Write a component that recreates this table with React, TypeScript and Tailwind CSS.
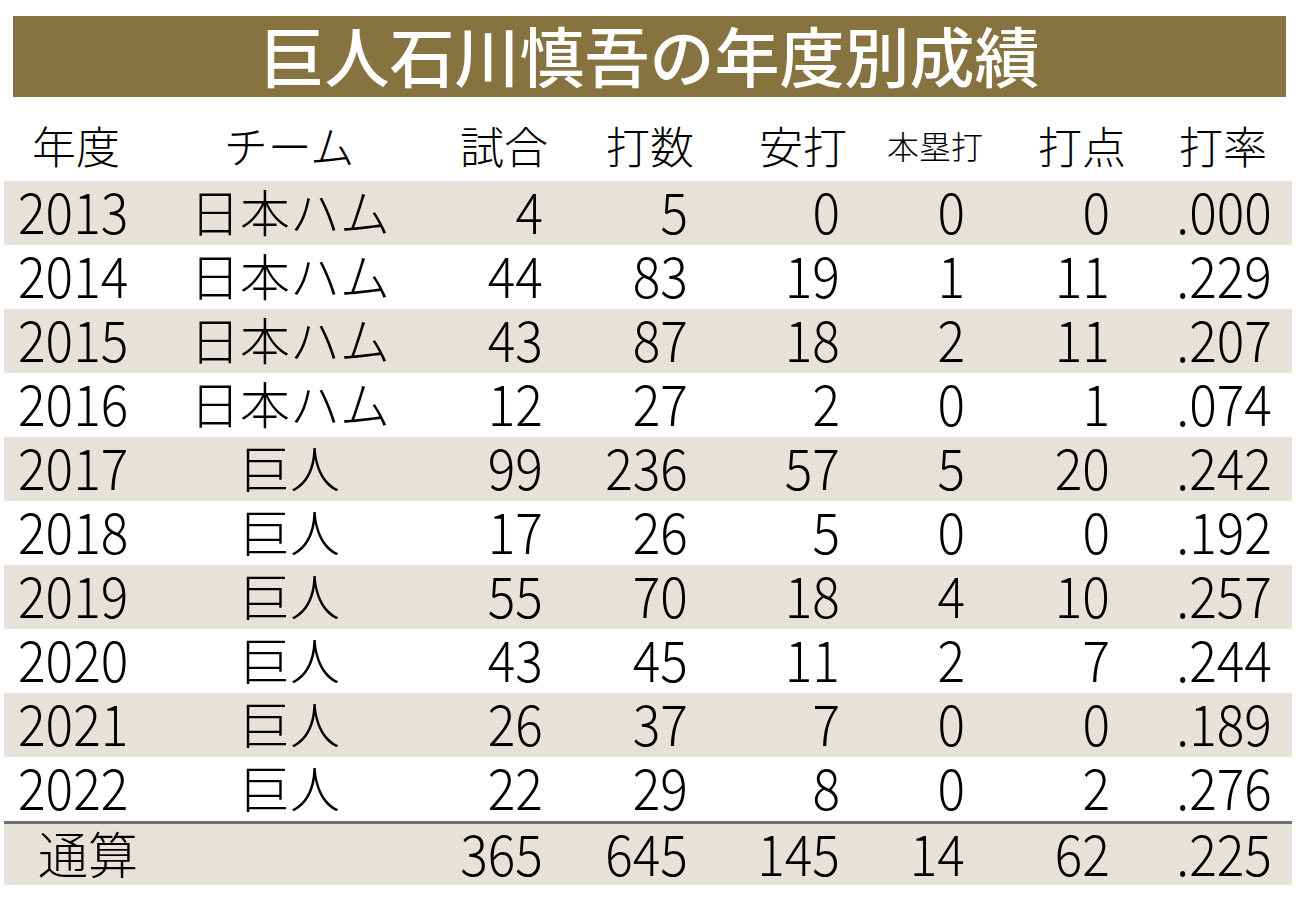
const rows = [
  { y: "2013", team: "日本ハム", g: "4", ab: "5", h: "0", hr: "0", rbi: "0", avg: ".000" },
  { y: "2014", team: "日本ハム", g: "44", ab: "83", h: "19", hr: "1", rbi: "11", avg: ".229" },
  { y: "2015", team: "日本ハム", g: "43", ab: "87", h: "18", hr: "2", rbi: "11", avg: ".207" },
  { y: "2016", team: "日本ハム", g: "12", ab: "27", h: "2", hr: "0", rbi: "1", avg: ".074" },
  { y: "2017", team: "巨人", g: "99", ab: "236", h: "57", hr: "5", rbi: "20", avg: ".242" },
  { y: "2018", team: "巨人", g: "17", ab: "26", h: "5", hr: "0", rbi: "0", avg: ".192" },
  { y: "2019", team: "巨人", g: "55", ab: "70", h: "18", hr: "4", rbi: "10", avg: ".257" },
  { y: "2020", team: "巨人", g: "43", ab: "45", h: "11", hr: "2", rbi: "7", avg: ".244" },
  { y: "2021", team: "巨人", g: "26", ab: "37", h: "7", hr: "0", rbi: "0", avg: ".189" },
  { y: "2022", team: "巨人", g: "22", ab: "29", h: "8", hr: "0", rbi: "2", avg: ".276" },
];

const font = { fontFamily: '"Noto Sans CJK JP", "Noto Sans", sans-serif' };

// condensed digits: the reference uses a narrow face, so squeeze the regular one
function Num({ w, children }: { w: string; children: React.ReactNode }) {
  return (
    <div className={`${w} text-right text-[56px] font-light leading-none`}>
      <span className="inline-block origin-right scale-x-[0.92]">{children}</span>
    </div>
  );
}

function Row({ r, shaded }: { r: (typeof rows)[number]; shaded: boolean }) {
  return (
    <div className={`flex h-[64px] items-center pb-[6px] ${shaded ? "bg-[#e6e2d9]" : ""}`}>
      <div className="w-[156px] pl-[14px] text-[56px] font-light leading-none">
        <span className="inline-block origin-left scale-x-[0.92]">{r.y}</span>
      </div>
      <div className="w-[260px] text-center text-[50px] font-light leading-none">{r.team}</div>
      <Num w="w-[123px]">{r.g}</Num>
      <Num w="w-[145px]">{r.ab}</Num>
      <Num w="w-[152px]">{r.h}</Num>
      <Num w="w-[125px]">{r.hr}</Num>
      <Num w="w-[145px]">{r.rbi}</Num>
      <Num w="w-[162px]">{r.avg}</Num>
    </div>
  );
}

export default function App() {
  return (
    <div className="h-[908px] w-[1300px] bg-white text-black" style={font}>
      <div className="pt-[16px] pl-[13px] pr-[14px]">
        <div className="flex h-[81px] items-center justify-center pb-[4px] bg-[#877340] text-[65px] font-medium leading-none text-white">
          巨人石川慎吾の年度別成績
        </div>
      </div>
      <div className="flex h-[84px] items-center whitespace-nowrap pt-[12px] text-[44px] font-light leading-none">
        <div className="flex w-[152px] justify-center">年度</div>
        <div className="flex w-[274px] justify-center">チーム</div>
        <div className="flex w-[156px] justify-center">試合</div>
        <div className="flex w-[136px] justify-center">打数</div>
        <div className="flex w-[170px] justify-center">安打</div>
        <div className="flex w-[94px] justify-center text-[32px]">本塁打</div>
        <div className="flex w-[200px] justify-center">打点</div>
        <div className="flex w-[82px] justify-center">打率</div>
      </div>
      <div className="ml-[4px] mr-[8px]">
        {rows.map((r, i) => (
          <Row key={r.y} r={r} shaded={i % 2 === 0} />
        ))}
        <div className="flex h-[64px] items-center border-t-[3px] border-[#6e6e6e] bg-[#e6e2d9] pb-[6px]">
          <div className="w-[416px] pl-[34px] text-[50px] font-light leading-none">通算</div>
          <Num w="w-[123px]">365</Num>
          <Num w="w-[145px]">645</Num>
          <Num w="w-[152px]">145</Num>
          <Num w="w-[125px]">14</Num>
          <Num w="w-[145px]">62</Num>
          <Num w="w-[162px]">.225</Num>
        </div>
      </div>
    </div>
  );
}
